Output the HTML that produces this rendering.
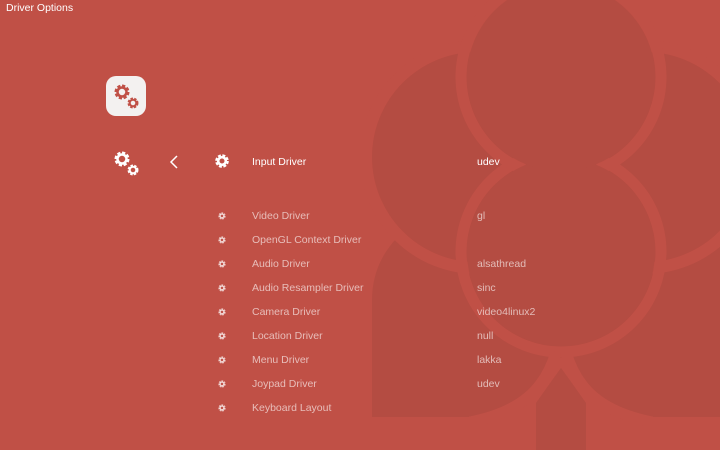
<!DOCTYPE html>
<html><head><meta charset="utf-8"><style>
body{margin:0;width:720px;height:450px;overflow:hidden;background:#c05046;font-family:"Liberation Sans",sans-serif;position:relative}
svg.bg{position:absolute;left:0;top:0}
.t{position:absolute;font-size:10.5px;line-height:12px;white-space:nowrap}
.l{color:rgba(255,255,255,0.62)}
.w{color:#fff}
.ic{position:absolute}
</style></head><body>
<svg class="bg" width="720" height="450" viewBox="0 0 720 450">
<g fill="#b44c42">
<path d="M372,417 L372,300 C372,272 384,250 400,235 L561,235 L561,360 C545,395 515,417 470,417 Z"/>
<path d="M750,417 L750,300 C750,272 738,250 722,235 L561,235 L561,360 C577,395 607,417 652,417 Z"/>
<path d="M536,402 L561,368 L586,402 L586,450 L536,450 Z"/>
</g>
<g fill="none" stroke="#c05046" stroke-width="12">
<circle cx="477" cy="157" r="111"/>
<circle cx="645" cy="157" r="111"/>
</g>
<g fill="#b44c42">
<circle cx="477" cy="157" r="105"/>
<circle cx="645" cy="157" r="105"/>
</g>
<g fill="none" stroke="#c05046" stroke-width="11">
<circle cx="561" cy="252" r="100"/>
<circle cx="561" cy="77" r="100"/>
</g>
<g fill="#b44c42">
<circle cx="561" cy="252" r="94"/>
<circle cx="561" cy="77" r="94"/>
</g>
<g fill="none" stroke="#c05046" stroke-width="11">
<path d="M556,352 C545,390 520,412 470,422"/>
<path d="M566,352 C577,390 602,412 652,422"/>
<path d="M561,358 L530,402 M561,358 L592,402"/>
</g>
</svg>
<div class="t w" style="left:6px;top:2px">Driver Options</div>
<div class="ic" style="left:106px;top:76px;width:40px;height:40px;background:#f3f1f0;border-radius:10px"></div>
<svg class="ic" style="left:106px;top:76px" width="40" height="40" viewBox="0 0 40 40">
<g fill="none" stroke="#c05046">
<circle cx="16" cy="16" r="5.5" stroke-width="4" stroke-dasharray="2.8 1.5"/>
<circle cx="16" cy="16" r="4.5" stroke-width="2.5"/>
<circle cx="27" cy="27" r="4" stroke-width="3" stroke-dasharray="2.2 1.1"/>
<circle cx="27" cy="27" r="3.3" stroke-width="2"/>
</g></svg>
<svg class="ic" style="left:106px;top:140px" width="40" height="40" viewBox="0 0 40 40">
<g fill="none" stroke="#fff">
<circle cx="16" cy="19" r="5.5" stroke-width="4" stroke-dasharray="2.8 1.5"/>
<circle cx="16" cy="19" r="4.5" stroke-width="2.5"/>
<circle cx="27" cy="30" r="4" stroke-width="3" stroke-dasharray="2.2 1.1"/>
<circle cx="27" cy="30" r="3.3" stroke-width="2"/>
</g></svg>
<svg class="ic" style="left:168px;top:154px" width="12" height="16" viewBox="0 0 12 16"><path d="M9,2 L3,8 L9,14" fill="none" stroke="#fff" stroke-width="1.5"/></svg>
<svg class="ic" style="left:212px;top:151px" width="20" height="20" viewBox="0 0 20 20"><circle cx="10" cy="10" r="4.8" fill="none" stroke="#fff" stroke-width="4" stroke-dasharray="2.5 1.3"/><circle cx="10" cy="10" r="3.8" fill="none" stroke="#fff" stroke-width="2.6"/></svg>
<div class="t w" style="left:252px;top:156px">Input Driver</div>
<div class="t w" style="left:477px;top:156px">udev</div>
<div class="t l" style="left:252px;top:210px">Video Driver</div><div class="t l" style="left:477px;top:210px">gl</div>
<div class="t l" style="left:252px;top:234px">OpenGL Context Driver</div>
<div class="t l" style="left:252px;top:258px">Audio Driver</div><div class="t l" style="left:477px;top:258px">alsathread</div>
<div class="t l" style="left:252px;top:282px">Audio Resampler Driver</div><div class="t l" style="left:477px;top:282px">sinc</div>
<div class="t l" style="left:252px;top:306px">Camera Driver</div><div class="t l" style="left:477px;top:306px">video4linux2</div>
<div class="t l" style="left:252px;top:330px">Location Driver</div><div class="t l" style="left:477px;top:330px">null</div>
<div class="t l" style="left:252px;top:354px">Menu Driver</div><div class="t l" style="left:477px;top:354px">lakka</div>
<div class="t l" style="left:252px;top:378px">Joypad Driver</div><div class="t l" style="left:477px;top:378px">udev</div>
<div class="t l" style="left:252px;top:402px">Keyboard Layout</div>
<svg class="ic" style="left:0;top:0" width="720" height="450" viewBox="0 0 720 450">
<defs><g id="g"><circle r="2.5" fill="none" stroke="rgba(255,255,255,0.6)" stroke-width="2.4" stroke-dasharray="1.4 0.8"/><circle r="2" fill="none" stroke="rgba(255,255,255,0.6)" stroke-width="1.6"/></g></defs>
<use href="#g" x="222" y="216"/><use href="#g" x="222" y="240"/><use href="#g" x="222" y="264"/><use href="#g" x="222" y="288"/><use href="#g" x="222" y="312"/><use href="#g" x="222" y="336"/><use href="#g" x="222" y="360"/><use href="#g" x="222" y="384"/><use href="#g" x="222" y="408"/>
</svg>
</body></html>
